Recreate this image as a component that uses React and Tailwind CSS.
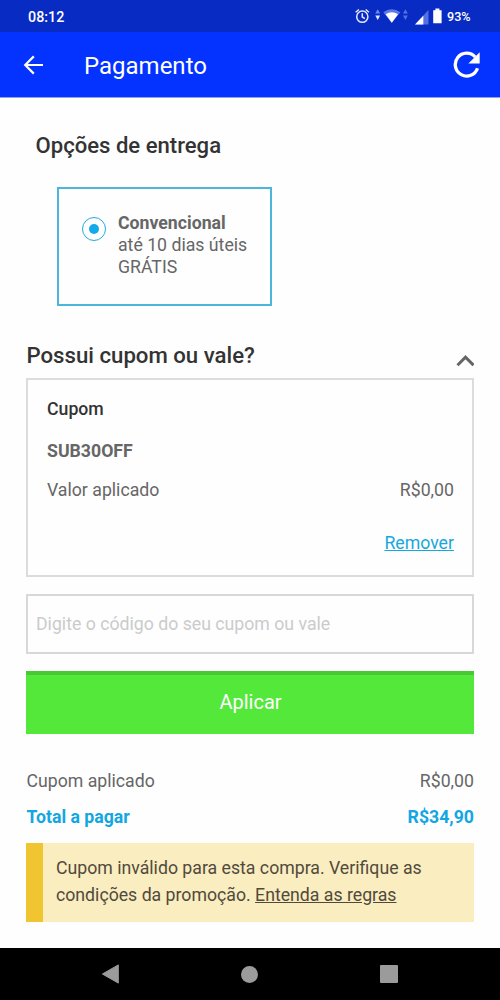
import React from "react";

function StatusBar() {
  return (
    <div className="flex h-8 items-center justify-between bg-[#082bc4] pl-[28px] pr-7 text-[14.3px] font-medium text-white">
      <span className="pt-px leading-8">08:12</span>
      <div className="flex h-8 items-center">
        <svg className="h-8 w-[92px]" viewBox="0 0 92 32" fill="none">
          <g stroke="#e4e9ff" strokeWidth="1.5">
            <circle cx="7.3" cy="16.7" r="5.6" />
            <path d="M7.3 13.2v3.8l2.6 1.6M.7 12.3l3.2-2.8M13.9 12.3l-3.2-2.8" />
          </g>
          <path d="M22.7 9.2l2.5 4.4h-5z" fill="#6f86ec" />
          <path d="M22.7 20l2.4-4.6h-4.8z" fill="#e4e9ff" />
          <path d="M28.3 12.2Q36.7 6.3 45.3 12.2L36.8 22.8z" fill="#6179e8" />
          <path d="M30.6 14.2Q36.8 10.3 43 14.2L36.8 22.8z" fill="#fff" />
          <path d="M50.4 9.2l2.4 4.4H48zM50.4 20l2.4-4.6H48z" fill="#5570e2" />
          <path d="M60 24.5L73.5 10v14.5z" fill="#5570e2" />
          <path d="M60 24.5L68.3 15.8v8.7z" fill="#fff" />
          <path d="M78.2 10.2h2.2V8.5h4v1.7h2.2v13.1h-8.4z" fill="#fff" />
        </svg>
        <span className="w-[25px] pt-px text-[12.6px] leading-8">93%</span>
      </div>
    </div>
  );
}

function Header() {
  return (
    <header className="flex h-[66px] items-center border-b border-[#8d9fff] bg-[#0432ff] text-white">
      <svg className="ml-[23px] h-5 w-5" viewBox="0 0 20 20" fill="none" stroke="currentColor" strokeWidth="2.2">
        <path d="M10.8 1.4L2.2 10l8.6 8.6M2 10h18" />
      </svg>
      <h1 className="ml-[41px] pt-[3px] text-[24px] leading-7">Pagamento</h1>
      <svg className="ml-auto mr-[19px] h-7 w-7" viewBox="0 0 28 28" fill="none">
        <path d="M22.2 6A11.4 11.4 0 1 0 24.5 17.2" stroke="currentColor" strokeWidth="3.3" />
        <path d="M26.7 1.2v11.4H15.4z" fill="currentColor" />
      </svg>
    </header>
  );
}

function Row({ label, value, className }) {
  return (
    <div className={className}>
      <span>{label}</span>
      <span>{value}</span>
    </div>
  );
}

function NavigationBar() {
  return (
    <nav className="flex h-[52px] items-center bg-black text-[#9b9b9b]">
      <svg className="ml-[101px] h-5 w-[18px]" viewBox="0 0 18 20">
        <path d="M17.3.9v18.2L1.4 10z" fill="currentColor" stroke="currentColor" strokeLinejoin="round" />
      </svg>
      <div className="ml-[122px] h-[17px] w-[17px] rounded-full bg-[#9b9b9b]" />
      <div className="ml-[122px] h-[18px] w-[18px] rounded-[1px] bg-[#9b9b9b]" />
    </nav>
  );
}

export default function App() {
  return (
    <div className="flex h-[1000px] w-[500px] flex-col overflow-hidden bg-[#fefefe] font-['Roboto',sans-serif] text-[17.7px] text-[#666]">
      <StatusBar />
      <Header />
      <main className="flex-1 pl-[26px] pr-[26px]">
        <h2 className="ml-[9.5px] mt-[33px] text-[22.1px] font-medium leading-7 text-[#333]">Opções de entrega</h2>
        <label className="ml-[31px] mt-[28px] flex h-[119px] w-[215px] border-2 border-[#4bb5dc] pl-[23px] pt-[23px]">
          <span className="mt-[5px] flex h-6 w-6 items-center justify-center rounded-full border-[1.5px] border-[#24a9de]">
            <span className="h-[10px] w-[10px] rounded-full bg-[#13aae9]" />
          </span>
          <span className="ml-3 flex flex-col leading-[22px]">
            <strong className="font-bold">Convencional</strong>
            <span>até 10 dias úteis</span>
            <span>GRÁTIS</span>
          </span>
        </label>
        <div className="mt-[35px] flex h-[37px] justify-between">
          <h2 className="pl-[0.5px] text-[22.2px] font-medium leading-7 text-[#333]">Possui cupom ou vale?</h2>
          <svg className="mt-[13px] h-[14px] w-[18px]" viewBox="0 0 18 14" fill="none" stroke="#666" strokeWidth="3">
            <path d="M1.5 11.2l8-8 8 8" />
          </svg>
        </div>
        <section className="flex h-[199px] flex-col border-2 border-[#dcdcdc] pl-[19px] pr-[18px]">
          <h3 className="mt-[17px] font-medium leading-6 text-[#333]">Cupom</h3>
          <strong className="mt-[18px] font-bold leading-6">SUB30OFF</strong>
          <Row label="Valor aplicado" value="R$0,00" className="mt-[15px] flex justify-between leading-6" />
          <a className="mt-[29px] self-end leading-6 text-[#18a7dc] underline">Remover</a>
        </section>
        <div className="mt-[17px] flex h-[60px] items-center border-2 border-[#d8d8d8] pl-[8px] pt-px text-[#cbcbcb]">
          Digite o código do seu cupom ou vale
        </div>
        <button className="mt-[17px] flex h-[63px] w-full items-center justify-center border-t-4 border-[#46c932] bg-[#54e83b] pb-[5px] pl-px text-[20px] text-white">
          Aplicar
        </button>
        <Row label="Cupom aplicado" value="R$0,00" className="mt-[35px] flex justify-between pl-[0.5px] leading-6" />
        <Row label="Total a pagar" value="R$34,90" className="mt-[12px] flex justify-between pl-[0.5px] font-bold leading-6 text-[#13a6e3]" />
        <p className="mt-[14px] h-[79px] whitespace-nowrap border-l-[17px] border-[#f0c531] bg-[#faedc0] pl-[13px] pt-[12px] leading-[26.5px] text-[#504a3c]">
          Cupom inválido para esta compra. Verifique as
          <br />
          condições da promoção. <a className="underline">Entenda as regras</a>
        </p>
      </main>
      <NavigationBar />
    </div>
  );
}
